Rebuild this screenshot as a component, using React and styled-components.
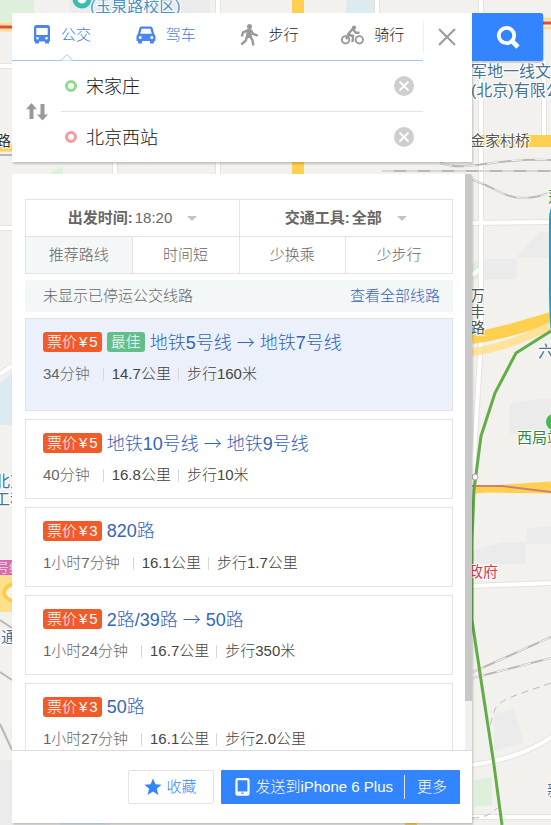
import React, { Fragment, useEffect, useRef, useState } from 'react';
import styled, { createGlobalStyle, css } from 'styled-components';

const GlobalStyle = createGlobalStyle`
  * {
    box-sizing: border-box;
  }

  body {
    margin: 0;
    color: #666;
    font: 300 15px/20px "Liberation Sans", "Noto Sans CJK SC", sans-serif;
  }

  button,
  input,
  select {
    margin: 0;
    padding: 0;
    border: 0;
    background: none;
    color: inherit;
    font: inherit;
  }

  button {
    cursor: pointer;
  }

  svg {
    display: block;
    flex: none;
  }
`;

const Page = styled.div`
  position: relative;
  display: flex;
  flex-direction: column;
  gap: 12px;
  height: 100vh;
  min-height: 480px;
  padding: 13px 8px 2px 12px;
  overflow: hidden;
  background: #f3f1ed;
`;

const MapCanvas = styled.svg`
  position: absolute;
  top: 0;
  left: 0;
  width: 100%;
  height: 100%;
`;

const SearchBox = styled.form`
  position: relative;
  display: grid;
  grid-template-columns: 1fr 71px;
  align-items: start;
`;

const SearchPanel = styled.div`
  display: grid;
  grid-template-columns: 1fr 49px;
  align-items: start;
  background: #fff;
  box-shadow: 1px 2px 2px rgba(0, 0, 0, 0.2);
`;

const SearchButton = styled.button`
  display: flex;
  align-items: center;
  justify-content: center;
  height: 48px;
  border-radius: 0 2px 2px 0;
  background: #3385ff;
  box-shadow: 1px 2px 1px rgba(0, 0, 0, 0.15);
`;

const Tabs = styled.div`
  display: flex;
  height: 48px;
  border-bottom: 1px solid #a3c3f3;
`;

const Tab = styled.button`
  position: relative;
  flex: 1;
  display: flex;
  align-items: center;
  gap: 10px;
  padding: 0 0 3px 21px;
  color: ${({ $blue }) => ($blue ? '#3d7fd9' : '#222')};
  white-space: nowrap;
`;

const Notch = styled.svg`
  position: absolute;
  left: 49px;
  bottom: -1px;
`;

const CloseButton = styled.button`
  display: flex;
  align-items: center;
  justify-content: center;
  height: 32px;
  margin-top: 8px;
  padding-right: 2px;
  border-left: 1px solid #eee;
`;

const Route = styled.div`
  display: grid;
  grid-template-columns: 49px 1fr;
  height: 101px;
`;

const SwapButton = styled.button`
  display: flex;
  align-items: center;
  justify-content: center;
`;

const Stops = styled.div`
  display: flex;
  flex-direction: column;
`;

const Stop = styled.div`
  flex: 1;
  display: flex;
  align-items: center;
  gap: 9px;
  padding: 0 9px 0 4px;

  & + & {
    border-top: 1px solid #e3e3e3;
  }
`;

const Ring = styled.span`
  width: 12px;
  height: 12px;
  border: 3px solid ${({ $color }) => $color};
  border-radius: 50%;
`;

const StopInput = styled.input`
  flex: 1;
  min-width: 0;
  height: 32px;
  padding-bottom: 2px;
  color: #111;
  font-size: 18px;
  outline: none;
`;

const Results = styled.section`
  position: relative;
  flex: 1;
  display: flex;
  flex-direction: column;
  min-height: 0;
  margin-right: 71px;
  background: #fff;
  box-shadow: 1px 2px 2px rgba(0, 0, 0, 0.2);
`;

const ScrollArea = styled.div`
  flex: 1;
  display: flex;
  min-height: 0;
`;

const Scroller = styled.div`
  flex: 1;
  min-width: 0;
  padding: 25px 12px 41px 13px;
  overflow-y: auto;
  scrollbar-width: none;
`;

const Track = styled.div`
  width: 7px;
  background: #f0f0f0;
`;

const Thumb = styled.div`
  border-radius: 0 2px 0 0;
  background: #c8c8c8;
`;

const Filters = styled.div`
  border: 1px solid #e3e3e3;
`;

const FilterRow = styled.div`
  display: flex;

  & + & {
    border-top: 1px solid #e3e3e3;
  }
`;

const cell = css`
  flex: 1;
  display: flex;
  align-items: center;
  justify-content: center;
  height: 36px;

  & + & {
    border-left: 1px solid #e3e3e3;
  }
`;

const Picker = styled.label`
  ${cell}
  gap: 2px;
  font-weight: bold;
`;

const Select = styled.select`
  padding-right: 24px;
  font-weight: ${({ $bold }) => ($bold ? 'bold' : 300)};
  appearance: none;
  outline: none;
`;

const Caret = styled.span`
  margin-left: -12px;
  border: 5px solid transparent;
  border-top-color: #c4c4c4;
  border-bottom: 0;
  pointer-events: none;
`;

const SortButton = styled.button`
  ${cell}
  background: ${({ $active }) => ($active ? '#f4f7f7' : '#fff')};
`;

const Notice = styled.p`
  display: flex;
  justify-content: space-between;
  align-items: center;
  height: 32px;
  margin: 6px 0;
  padding: 0 13px 0 18px;
  border-radius: 2px;
  background: #f4f7f7;
`;

const Link = styled.a`
  color: #3464b8;
  text-decoration: none;
`;

const PlanList = styled.ul`
  display: flex;
  flex-direction: column;
  gap: 8px;
  margin: 0;
  padding: 0;
  list-style: none;
`;

const Plan = styled.li`
  padding: 11px 17px ${({ $best }) => ($best ? '26px' : '13px')};
  border: 1px solid #e3e3e3;
  background: ${({ $best }) => ($best ? '#ebf0fb' : '#fff')};
`;

const PlanHead = styled.div`
  display: flex;
  align-items: center;
  gap: 5px;
  height: 24px;
  margin-bottom: 10px;
`;

const Badge = styled.span`
  padding: 0 4px;
  border-radius: 3px;
  background: ${({ $color }) => $color};
  color: #fff;
  white-space: nowrap;
`;

const Yen = styled.span`
  margin: 0 2px;
`;

const PlanTitle = styled(Link)`
  font-size: 18px;
  line-height: 24px;
  white-space: nowrap;
`;

const Arrow = styled.span`
  font-family: "Noto Sans CJK SC", sans-serif;
`;

const PlanMeta = styled.div`
  display: flex;
  align-items: center;
  color: #444;
`;

const Duration = styled.span`
  padding-right: 6px;
  color: #666;
`;

const Divider = styled.span`
  width: 1px;
  height: 13px;
  margin: 0 8px 0 7px;
  background: #d8d8d8;
`;

const Footer = styled.footer`
  display: flex;
  justify-content: flex-end;
  gap: 7px;
  padding: 19px 12px;
  border-top: 1px solid #ddd;
`;

const SaveButton = styled.button`
  display: flex;
  align-items: center;
  gap: 4px;
  height: 34px;
  padding: 0 17px 0 15px;
  border: 1px solid #e3e3e3;
  border-radius: 2px;
  color: #3385ff;
`;

const SendGroup = styled.div`
  display: flex;
  align-items: center;
  height: 34px;
  border-radius: 1px;
  background: #3385ff;
  color: #fff;
`;

const SendButton = styled.button`
  display: flex;
  align-items: center;
  gap: 5px;
  padding: 0 11px 0 14px;
  white-space: nowrap;
`;

const MoreButton = styled.button`
  height: 24px;
  padding: 0 13px 0 12px;
  border-left: 1px solid #dbe9ff;
`;

const BusIcon = () => (
  <svg width="18" height="20" viewBox="0 0 18 20" fill="#4a86ee">
    <path fillRule="evenodd" d="M3 0h12Q17 0 17 2.500V16.500H1V2.500Q1 0 3 0ZM3.300 3V10h11.400V3ZM4.500 12a1.300 1.300 0 1 0 0 2.600a1.300 1.300 0 0 0 0-2.600ZM13.500 12a1.300 1.300 0 1 0 0 2.600a1.300 1.300 0 0 0 0-2.600Z" />
    <path d="M2 16h4v2.500H2zM12 16h4v2.500h-4z" />
  </svg>
);

const CarIcon = () => (
  <svg width="20" height="20" viewBox="0 0 20 20" fill="#4a86ee">
    <path fillRule="evenodd" d="M5.500 1.500h9q1.500 0 2 1.300L18.200 9Q19.500 10 19.500 11.500V16H.5v-4.500Q.5 10 1.800 9L3.500 2.800Q4 1.500 5.500 1.500ZM5.700 3.800 4.200 8.800h11.600L14.300 3.800ZM4.200 11a1.500 1.500 0 1 0 0 3a1.500 1.500 0 0 0 0-3ZM15.800 11a1.500 1.500 0 1 0 0 3a1.500 1.500 0 0 0 0-3Z" />
    <path d="M2 16h4v2.500H3q-1 0-1-1zM14 16h4v1.500q0 1-1 1h-3z" />
  </svg>
);

const WalkIcon = () => (
  <svg width="20" height="22" viewBox="0 0 20 22" fill="none" stroke="#999" strokeWidth="2.400">
    <circle cx="10.500" cy="2.600" r="2.500" fill="#999" stroke="none" />
    <path d="M8 5h4l1.200 9H6.600z" fill="#999" stroke="none" />
    <path d="M9 6.300 4 8.300 2.800 12.500M11.800 6l2.400 4 4.600 1.700M8 12.500 6.800 16.500l-4.500 4M11.300 12.500l2.200 3.800.9 5.200" />
  </svg>
);

const BikeIcon = () => (
  <svg width="23" height="20" viewBox="0 0 23 20" fill="none" stroke="#999" strokeWidth="1.900">
    <circle cx="4.600" cy="14.800" r="3.700" />
    <circle cx="18.300" cy="14.800" r="3.700" />
    <circle cx="13" cy="2.700" r="2.100" fill="#999" stroke="none" />
    <path d="m7 9.500 4.500-5.500 3.500 3.700h3.500" strokeWidth="2.400" />
    <path d="m6 9.500 6 1.500-.5 6M5 14l3-4" strokeWidth="2.400" />
  </svg>
);

const CloseIcon = () => (
  <svg width="18" height="18" viewBox="0 0 18 18" stroke="#999" strokeWidth="2">
    <path d="M1 1l16 16M17 1 1 17" />
  </svg>
);

const SearchIcon = () => (
  <svg width="24" height="24" viewBox="0 0 24 24" fill="none" stroke="#fff">
    <circle cx="10.500" cy="10.500" r="7.700" strokeWidth="3.800" />
    <path d="m16 16 6 6" strokeWidth="4.600" />
  </svg>
);

const SwapIcon = () => (
  <svg width="22" height="18" viewBox="0 0 22 18" fill="#999">
    <path d="M5.500 0 11 6.200H7.500V16h-4V6.200H0zM14.500 1h4v10.500H22L16.500 17.500 11 11.500h3.500z" />
  </svg>
);

const ClearIcon = () => (
  <svg width="20" height="20" viewBox="0 0 20 20">
    <circle cx="10" cy="10" r="10" fill="#cecece" />
    <path d="m5.500 5.500 9 9M14.500 5.500l-9 9" stroke="#fff" strokeWidth="1.800" />
  </svg>
);

const StarIcon = () => (
  <svg width="18" height="18" viewBox="0 0 18 18" fill="#3385ff">
    <path d="m9 .5 2.400 5.800 6.200.5-4.800 4 1.600 6.200L9 13.600 3.600 17l1.600-6.200-4.800-4 6.200-.5z" />
  </svg>
);

const PhoneIcon = () => (
  <svg width="15" height="18" viewBox="0 0 15 18">
    <rect x="1.500" y="1.200" width="12" height="15.500" rx="1" fill="none" stroke="#fff" strokeWidth="2.200" />
    <path d="M2 13.500h11V17H2z" fill="#fff" />
    <path d="M6 15.200h3" stroke="#3385ff" />
  </svg>
);

const CityMap = () => (
  <MapCanvas viewBox="0 0 551 825" preserveAspectRatio="xMinYMin slice" aria-hidden="true">
    <g fill="#dcebf0">
      <path d="M347 0h30v14h-32zM0 384l12-12v53H0zM60 822h50v3H60z" />
    </g>
    <g fill="#def0dc">
      <path d="M0 0h34v22H0zM50 174l10-7h3v7zM472 264l8-5v18l-8 5zM474 780l18-3v28l-18 2z" />
    </g>
    <g fill="#ebebeb">
      <path d="M517 256 540 232h11v26h-34zM483 259h34v20h-34zM510 403l41-5v36h-41zM472 550l32-8h22v22h-54zM527 528l24-2v18h-24zM494 714l20-5 10 34-30 8z" />
      <path d="M70 0h140v13H70zM0 760h12v65H0z" />
    </g>
    <g fill="none" stroke="#e4e3df" strokeWidth="6">
      <path d="M481 0v340l-9 150M544 60v80M0 66h12M0 228h12M472 223l79-1M472 586l79-3M472 765c30-4 60-14 79-28M472 817h79M0 374l12-8M115 160v16M218 0v176M377 0v14" />
    </g>
    <g fill="none" stroke="#fff" strokeWidth="4">
      <path d="M481 0v340l-9 150M544 60v80M0 66h12M0 228h12M472 223l79-1M472 586l79-3M472 765c30-4 60-14 79-28M472 817h79M0 374l12-8M115 160v16M218 0v176M377 0v14M472 275l9-6" />
    </g>
    <g fill="none" stroke="#ffd04f" strokeWidth="11">
      <path d="M298 0v14M298 162v13M472 141h79M472 338c30-4 52-12 79-20" strokeWidth="12" />
      <path d="M472 352c30-4 52-14 79-26" stroke="#ffe39a" strokeWidth="8" />
      <path d="M474 490l77-5M476 489l75 1" strokeWidth="7" />
      <path d="M0 148h12M405 824h12" strokeWidth="7" />
      <path d="M0 574h12v38H0z" fill="#ffe08a" stroke="none" />
      <path d="M13 584Q5 586 4 593q1 6 9 8" fill="#f7f5ee" stroke="#ffcc4a" strokeWidth="4" />
    </g>
    <path d="M0 24h12M0 30h12M543 19h8M543 28h8" stroke="#ffe08a" strokeWidth="3" />
    <path d="M0 27h12M543 23h8" stroke="#df4b43" strokeWidth="3" />
    <g fill="none" stroke="#b8b8b8" strokeWidth="2">
      <path d="M382 171h169M440 163c30 10 50-6 111-3M472 180c20 5 30 18 52 18 12 0 20-3 27-6M0 155h12M473 672l78-35M473 678l78-20M0 620l12 8M0 672l12 8M0 724l12 26" />
    </g>
    <g fill="none" stroke="#f5f5f3" strokeWidth="1" strokeDasharray="12 12">
      <path d="M382 171h169M440 163c30 10 50-6 111-3M472 180c20 5 30 18 52 18 12 0 20-3 27-6M473 672l78-35M473 678l78-20" />
    </g>
    <path d="M551 683c-40 14-50 16-56 26l-6 20M472 818c12 0 20-4 25-10" fill="none" stroke="#bbb" strokeDasharray="7 5" />
    <path d="M472 486h30l49 6" fill="none" stroke="#cb8275" strokeWidth="2" />
    <path d="M551 331 516 353 495 393 481 436 474 490 472 540v80l9 60 13 85 8 60" fill="none" stroke="#63ad47" strokeWidth="3" />
    <circle cx="475" cy="477" r="3" fill="#fff" stroke="#aaa" />
    <path d="M551 208q-2 4-2 14v60q0 35 2 50z" fill="#169fd8" />
    <circle cx="554" cy="422" r="8" fill="#45b850" />
    <circle cx="82" cy="-1" r="7" fill="#fff" stroke="#37beb1" strokeWidth="5" />
    <path d="M0 560h12v15H0z" fill="#d66bb0" />
    <g fontSize="16" fontWeight="400" fill="#457294" stroke="#fff" strokeWidth="2" paintOrder="stroke">
      <text x="90" y="12" fill="#4b91c6">(玉泉路校区)</text>
      <text x="471" y="77">军地一线文化</text>
      <text x="471" y="96">(北京)有限公司</text>
      <text x="538" y="357">六里桥</text>
      <text x="547" y="796">新发地</text>
      <text x="-6" y="487">北京</text>
      <text x="-6" y="505">工程</text>
      <text x="1" y="643">通</text>
    </g>
    <g fontSize="15" fontWeight="400" fill="#555" stroke="#fff" strokeWidth="2" paintOrder="stroke">
      <text x="470" y="146">金家村桥</text>
      <text x="470" y="301">万</text>
      <text x="470" y="317">丰</text>
      <text x="470" y="333">路</text>
      <text x="-4" y="146" fill="#333">路</text>
      <text x="517" y="443" fill="#31883a">西局站</text>
      <text x="548" y="202" fill="#31883a">莲</text>
      <text x="468" y="577" fill="#d33b4e">政府</text>
    </g>
    <text x="-4" y="572" fontSize="13" fill="#fff">号线</text>
  </MapCanvas>
);

const modes = [
  { name: '公交', Icon: BusIcon, blue: true },
  { name: '驾车', Icon: CarIcon, blue: true },
  { name: '步行', Icon: WalkIcon },
  { name: '骑行', Icon: BikeIcon },
];

const sorts = ['推荐路线', '时间短', '少换乘', '少步行'];

const plans = [
  { fare: 5, best: true, legs: ['地铁5号线', '地铁7号线'], time: '34分钟', distance: '14.7公里', walk: '步行160米' },
  { fare: 5, legs: ['地铁10号线', '地铁9号线'], time: '40分钟', distance: '16.8公里', walk: '步行10米' },
  { fare: 3, legs: ['820路'], time: '1小时7分钟', distance: '16.1公里', walk: '步行1.7公里' },
  { fare: 5, legs: ['2路/39路', '50路'], time: '1小时24分钟', distance: '16.7公里', walk: '步行350米' },
  { fare: 3, legs: ['50路'], time: '1小时27分钟', distance: '16.1公里', walk: '步行2.0公里' },
];

const StopField = ({ label, color, value, onChange }) => (
  <Stop>
    <Ring $color={color} />
    <StopInput aria-label={label} value={value} onChange={event => onChange(event.target.value)} />
    <button type="button" aria-label={`清空${label}`} onClick={() => onChange('')}>
      <ClearIcon />
    </button>
  </Stop>
);

const ScrollPane = ({ children }) => {
  const ref = useRef(null);
  const [thumb, setThumb] = useState({ size: 0, top: 0 });

  const measure = () => {
    const { clientHeight, scrollHeight, scrollTop } = ref.current;
    const ratio = clientHeight / scrollHeight;
    setThumb({ size: clientHeight * ratio, top: scrollTop * ratio });
  };

  useEffect(() => {
    measure();
    window.addEventListener('resize', measure);
    return () => window.removeEventListener('resize', measure);
  }, []);

  return (
    <ScrollArea>
      <Scroller ref={ref} onScroll={measure}>{children}</Scroller>
      <Track>
        <Thumb style={{ height: thumb.size, transform: `translateY(${thumb.top}px)` }} />
      </Track>
    </ScrollArea>
  );
};

const App = () => {
  const [mode, setMode] = useState('公交');
  const [sort, setSort] = useState('推荐路线');
  const [from, setFrom] = useState('宋家庄');
  const [to, setTo] = useState('北京西站');

  const swap = () => {
    setFrom(to);
    setTo(from);
  };

  return (
    <Page>
      <GlobalStyle />
      <CityMap />

      <SearchBox onSubmit={event => event.preventDefault()}>
        <SearchPanel>
          <div>
            <Tabs>
              {modes.map(({ name, Icon, blue }) => (
                <Tab key={name} type="button" $blue={blue} onClick={() => setMode(name)}>
                  <Icon />
                  {name}
                  {mode === name && (
                    <Notch width="12" height="7" viewBox="0 0 12 7">
                      <path d="M0 6.500 6 .7l6 5.800" fill="#fff" stroke="#a3c3f3" />
                    </Notch>
                  )}
                </Tab>
              ))}
            </Tabs>
            <Route>
              <SwapButton type="button" aria-label="交换起终点" onClick={swap}>
                <SwapIcon />
              </SwapButton>
              <Stops>
                <StopField label="起点" color="#8fdc8f" value={from} onChange={setFrom} />
                <StopField label="终点" color="#f79a9a" value={to} onChange={setTo} />
              </Stops>
            </Route>
          </div>
          <CloseButton type="button" aria-label="关闭">
            <CloseIcon />
          </CloseButton>
        </SearchPanel>
        <SearchButton type="submit" aria-label="搜索">
          <SearchIcon />
        </SearchButton>
      </SearchBox>

      <Results>
        <ScrollPane>
          <Filters>
            <FilterRow>
              <Picker>
                出发时间:
                <Select defaultValue="18:20">
                  <option>18:20</option>
                </Select>
                <Caret />
              </Picker>
              <Picker>
                交通工具:
                <Select $bold defaultValue="全部">
                  <option>全部</option>
                </Select>
                <Caret />
              </Picker>
            </FilterRow>
            <FilterRow>
              {sorts.map(name => (
                <SortButton key={name} type="button" $active={sort === name} onClick={() => setSort(name)}>
                  {name}
                </SortButton>
              ))}
            </FilterRow>
          </Filters>
          <Notice>
            未显示已停运公交线路
            <Link href="#all">查看全部线路</Link>
          </Notice>
          <PlanList>
            {plans.map(({ fare, best, legs, time, distance, walk }) => (
              <Plan key={legs.join()} $best={best}>
                <PlanHead>
                  <Badge $color="#f25a29">
                    票价<Yen>¥</Yen>{fare}
                  </Badge>
                  {best && <Badge $color="#64be8c">最佳</Badge>}
                  <PlanTitle href="#plan">
                    {legs.map((leg, i) => (
                      <Fragment key={leg}>
                        {i > 0 && <> <Arrow>→</Arrow> </>}
                        {leg}
                      </Fragment>
                    ))}
                  </PlanTitle>
                </PlanHead>
                <PlanMeta>
                  <Duration>{time}</Duration>
                  <Divider />
                  {distance}
                  <Divider />
                  {walk}
                </PlanMeta>
              </Plan>
            ))}
          </PlanList>
        </ScrollPane>
        <Footer>
          <SaveButton type="button">
            <StarIcon />
            收藏
          </SaveButton>
          <SendGroup>
            <SendButton type="button">
              <PhoneIcon />
              发送到iPhone 6 Plus
            </SendButton>
            <MoreButton type="button">更多</MoreButton>
          </SendGroup>
        </Footer>
      </Results>
    </Page>
  );
};

export default App;
